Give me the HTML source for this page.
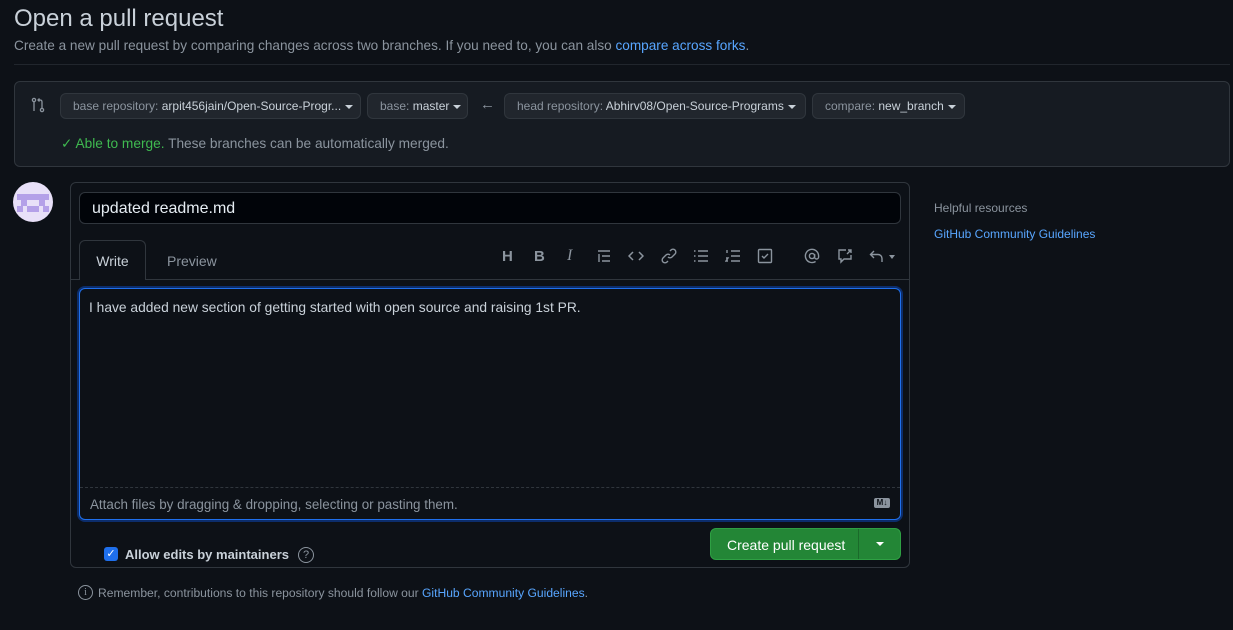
<!DOCTYPE html>
<html><head><style>
*{box-sizing:border-box;margin:0;padding:0}
body{width:1233px;height:630px;background:#0d1117;color:#c9d1d9;font-family:"Liberation Sans",sans-serif;position:relative;overflow:hidden}
.a{position:absolute}
.btn{position:absolute;top:93px;height:26px;border:1px solid #30363d;border-radius:6px;background:#21262d;font-size:12px;color:#8b949e;line-height:24px;padding:0 12px;white-space:nowrap}
.btn b{font-weight:normal;color:#c9d1d9}
.car{display:inline-block;width:0;height:0;border-left:4px solid transparent;border-right:4px solid transparent;border-top:4px solid #c9d1d9;margin-left:4px;vertical-align:middle}
.ic{position:absolute;top:248px;width:16px;height:16px}
</style></head><body>
<div class="a" style="left:14px;top:5px;font-size:24px;color:#c9d1d9">Open a pull request</div>
<div class="a" style="left:14px;top:38px;font-size:13.6px;color:#8b949e">Create a new pull request by comparing changes across two branches. If you need to, you can also <span style="color:#58a6ff">compare across forks</span>.</div>
<div class="a" style="left:14px;top:64px;width:1216px;height:1px;background:#21262d"></div>
<div class="a" style="left:14px;top:81px;width:1216px;height:86px;border:1px solid #30363d;border-radius:6px;background:#161b22"></div>
<svg class="a" style="left:30px;top:97px" width="16" height="16" viewBox="0 0 16 16" fill="none" stroke="#8b949e" stroke-width="1.3"><circle cx="4" cy="3" r="1.6"/><path d="M4 5v9"/><circle cx="12" cy="13" r="1.6"/><path d="M12 11V5q0-2-2-2H8M9.5 1.5 8 3l1.5 1.5"/></svg>
<div class="btn" style="left:60px;width:301px">base repository: <b>arpit456jain/Open-Source-Progr...</b><span class="car"></span></div>
<div class="btn" style="left:367px;width:101px">base: <b>master</b><span class="car"></span></div>
<div class="a" style="left:480px;top:96px;font-size:15px;color:#8b949e">←</div>
<div class="btn" style="left:504px;width:302px">head repository: <b>Abhirv08/Open-Source-Programs</b><span class="car"></span></div>
<div class="btn" style="left:812px;width:153px">compare: <b>new_branch</b><span class="car"></span></div>
<div class="a" style="left:61px;top:136px;font-size:13.7px;color:#8b949e"><span style="color:#3fb950">✓ Able to merge.</span> These branches can be automatically merged.</div>
<div class="a" style="left:13px;top:182px;width:40px;height:40px;border-radius:50%;background:#e8e0f8;overflow:hidden">
<div class="a" style="left:4px;top:12px;width:32px;height:6px;background:#b4a0e8"></div>
<div class="a" style="left:8px;top:18px;width:6px;height:6px;background:#b4a0e8"></div>
<div class="a" style="left:26px;top:18px;width:6px;height:6px;background:#b4a0e8"></div>
<div class="a" style="left:14px;top:24px;width:12px;height:6px;background:#b4a0e8"></div>
<div class="a" style="left:4px;top:24px;width:6px;height:6px;background:#b4a0e8"></div>
<div class="a" style="left:30px;top:24px;width:6px;height:6px;background:#b4a0e8"></div>
</div>
<div class="a" style="left:70px;top:182px;width:840px;height:386px;border:1px solid #30363d;border-radius:6px;background:#0d1117"></div>
<div class="a" style="left:79px;top:192px;width:822px;height:32px;border:1px solid #30363d;border-radius:6px;background:#010409;font-size:16px;padding:7px 12px;color:#e6edf3">updated readme.md</div>
<div class="a" style="left:71px;top:279px;width:838px;height:1px;background:#30363d"></div>
<div class="a" style="left:79px;top:240px;width:67px;height:40px;border:1px solid #30363d;border-bottom:none;border-radius:6px 6px 0 0;background:#0d1117;font-size:14px;text-align:center;line-height:40px;color:#c9d1d9">Write</div>
<div class="a" style="left:167px;top:253px;font-size:14px;color:#8b949e">Preview</div>
<div class="a" style="left:502px;top:248px;font-size:15px;color:#8b949e;font-weight:bold">H</div>
<div class="a" style="left:534px;top:248px;font-size:15px;color:#8b949e;font-weight:bold">B</div>
<div class="a" style="left:567px;top:247px;font-size:16px;color:#8b949e;font-style:italic;font-family:'Liberation Serif',serif">I</div>
<svg class="ic" style="left:596px" viewBox="0 0 16 16" stroke="#8b949e" stroke-width="1.4" fill="none"><path d="M2 3h12M6 8h8M6 13h8M3 6v8"/></svg>
<svg class="ic" style="left:628px" viewBox="0 0 16 16" stroke="#8b949e" stroke-width="1.5" fill="none"><path d="M5 4 1 8l4 4M11 4l4 4-4 4"/></svg>
<svg class="ic" style="left:661px" viewBox="0 0 16 16" stroke="#8b949e" stroke-width="1.4" fill="none"><path d="M7 9a3 3 0 0 0 4 0l3-3a2.8 2.8 0 0 0-4-4l-1 1M9 7a3 3 0 0 0-4 0l-3 3a2.8 2.8 0 0 0 4 4l1-1"/></svg>
<svg class="ic" style="left:693px" viewBox="0 0 16 16" stroke="#8b949e" stroke-width="1.4" fill="none"><path d="M5 3h10M5 8h10M5 13h10M1 3h1.5M1 8h1.5M1 13h1.5"/></svg>
<svg class="ic" style="left:725px" viewBox="0 0 16 16" stroke="#8b949e" stroke-width="1.4" fill="none"><path d="M6 3h9M6 8h9M6 13h9M2 2v3M1 10h2l-2 3h2"/></svg>
<svg class="ic" style="left:757px" viewBox="0 0 16 16" stroke="#8b949e" stroke-width="1.4" fill="none"><rect x="1.5" y="1.5" width="13" height="13" rx="1"/><path d="M5 8l2 2 4-4"/></svg>
<svg class="ic" style="left:804px" viewBox="0 0 16 16" stroke="#8b949e" stroke-width="1.4" fill="none"><circle cx="8" cy="8" r="2.6"/><path d="M10.6 6v3a2 2 0 0 0 4 0V8a6.6 6.6 0 1 0-3 5.5"/></svg>
<svg class="ic" style="left:837px" viewBox="0 0 16 16" stroke="#8b949e" stroke-width="1.4" fill="none"><path d="M9 2H2v9h2v3l3-3h7V7M10 6l4-4M11 2h3v3"/></svg>
<svg class="ic" style="left:869px" viewBox="0 0 16 16" stroke="#8b949e" stroke-width="1.4" fill="none"><path d="M5 3 1.5 6.5 5 10M2 6.5h7a4 4 0 0 1 4 4V14"/></svg>
<div class="a" style="left:889px;top:255px;border-left:3px solid transparent;border-right:3px solid transparent;border-top:4px solid #8b949e"></div>
<div class="a" style="left:79px;top:288px;width:822px;height:232px;border:1px solid #1f6feb;border-radius:6px;box-shadow:0 0 0 2px #0c2d6b;background:#0d1117"></div>
<div class="a" style="left:89px;top:300px;font-size:13.8px;color:#c9d1d9">I have added new section of getting started with open source and raising 1st PR.</div>
<div class="a" style="left:80px;top:487px;width:820px;border-top:1px dashed #30363d"></div>
<div class="a" style="left:90px;top:497px;font-size:13.4px;color:#8b949e">Attach files by dragging &amp; dropping, selecting or pasting them.</div>
<div class="a" style="left:874px;top:498px;width:16px;height:10px;background:#8b949e;border-radius:2px;font-size:8px;color:#0d1117;text-align:center;line-height:10px;font-weight:bold">M↓</div>
<div class="a" style="left:710px;top:528px;width:191px;height:32px;background:#238636;border-radius:6px;border:1px solid #2ea043"></div>
<div class="a" style="left:727px;top:537px;font-size:14px;color:#fff">Create pull request</div>
<div class="a" style="left:858px;top:529px;width:1px;height:30px;background:#1a6a2a"></div>
<div class="a" style="left:876px;top:542px;border-left:4px solid transparent;border-right:4px solid transparent;border-top:4px solid #fff"></div>
<div class="a" style="left:104px;top:547px;width:14px;height:14px;background:#1f6feb;border-radius:3px;color:#fff;font-size:11px;text-align:center;line-height:14px">✓</div>
<div class="a" style="left:125px;top:547px;font-size:13px;color:#c9d1d9;font-weight:bold">Allow edits by maintainers</div>
<div class="a" style="left:298px;top:547px;width:16px;height:16px;border:1.4px solid #8b949e;border-radius:50%;font-size:11px;text-align:center;line-height:14px;color:#8b949e">?</div>
<div class="a" style="left:78px;top:585px;width:15px;height:15px;border:1.3px solid #8b949e;border-radius:50%;font-size:10px;text-align:center;line-height:13px;color:#8b949e;font-family:'Liberation Serif',serif">i</div>
<div class="a" style="left:98px;top:586px;font-size:12.1px;color:#8b949e">Remember, contributions to this repository should follow our <span style="color:#58a6ff">GitHub Community Guidelines</span>.</div>
<div class="a" style="left:934px;top:201px;font-size:12px;color:#8b949e">Helpful resources</div>
<div class="a" style="left:934px;top:227px;font-size:12px;color:#58a6ff">GitHub Community Guidelines</div>
</body></html>
